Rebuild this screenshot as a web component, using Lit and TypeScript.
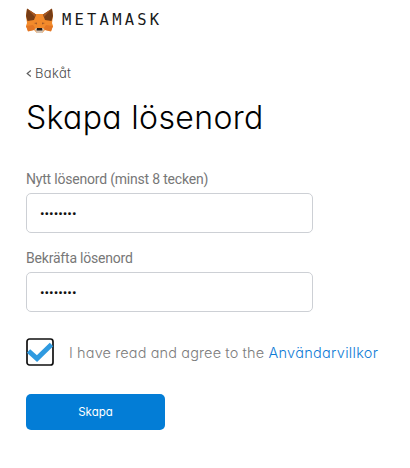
import { LitElement, html, css } from "lit";
import { customElement } from "lit/decorators.js";

@customElement("app-root")
export class AppRoot extends LitElement {
  static styles = css`
    :host {
      display: block;
      box-sizing: border-box;
      width: 410px;
      height: 468px;
      padding: 7px 26px 0;
      overflow: hidden;
      background: #fff;
      font-family: Inter, sans-serif;
      font-feature-settings: "cv11" 1;
      white-space: nowrap;
    }
    * { box-sizing: border-box; }
    .brand { display: flex; align-items: center; height: 26px; }
    .fox { width: 27px; height: 25px; margin-right: 9px; }
    .wordmark {
      font: 400 15.5px/26px "DejaVu Sans Mono", monospace;
      letter-spacing: 3.2px;
      color: #1a1a1a;
    }
    .back {
      display: flex;
      align-items: center;
      gap: 3px;
      height: 20px;
      margin-top: 30px;
      font-size: 13px;
      letter-spacing: 0.35px;
      color: #4d4d4d;
      font-weight: 300;
    }
    .back svg { width: 6px; height: 10px; }
    h1 {
      margin: 11px 0 0;
      height: 48px;
      font-size: 32px;
      letter-spacing: 0.35px;
      line-height: 48px;
      font-weight: 300;
      color: #000;
    }
    .label {
      display: block;
      height: 20px;
      font: 400 14px/20px Roboto, sans-serif;
      letter-spacing: -0.2px;
      color: #777;
    }
    .first { margin-top: 27px; }
    .second { margin-top: 15px; }
    .field {
      display: block;
      width: 287px;
      height: 40px;
      margin-top: 4px;
      padding: 0 13px 1px;
      border: 1px solid #cdd0d5;
      border-radius: 5px;
      outline: none;
      background: #fff;
      font: 400 13.500px/36px Roboto, sans-serif;
      color: #111;
    }
    .terms {
      display: flex;
      align-items: center;
      height: 28px;
      margin-top: 26px;
      font-size: 14.5px;
      letter-spacing: 0.12px;
      font-weight: 300;
      color: #7c7c7c;
    }
    .check { width: 28px; height: 28px; margin-right: 15px; }
    .link { color: #0f7cd6; letter-spacing: 0.3px; }
    .submit {
      display: block;
      width: 139px;
      height: 36px;
      margin-top: 28px;
      padding: 0;
      border: 0;
      border-radius: 5px;
      background: #037dd6;
      color: #fff;
      font: 400 11.500px/36px Inter, sans-serif;
      font-feature-settings: "cv11" 1;
    }
  `;

  render() {
    return html`
      <div class="brand">
        <svg class="fox" viewBox="0 0 27 25">
          <path d="M1 1 9 6H18L26 1 27 8 26 15 27 18 25 23 19 22 16 25H11L8 22 2 23 0 18 1 15 0 8Z" fill="#f28a2b"/>
          <path d="M1 .5 10 6.500 8 12 1.500 13 0 8ZM26 .5 17 6.500 19 12 25.500 13 27 8Z" fill="#763d16"/>
          <path d="M1 .5 10 6.500 9 9ZM26 .5 17 6.500 18 9Z" fill="#a85822"/>
          <path d="M0 18 7 17 9 20 8 22 2 23.500ZM27 18 20 17 18 20 19 22 25 23.500Z" fill="#e37624"/>
          <path d="M8 15 11 14.500 11 16.500ZM19 15 16 14.500 16 16.500Z" fill="#a65b28"/>
          <path d="M8.500 21 11 20H16L18.500 21 16 25H11Z" fill="#d5c5b5"/>
          <path d="M11 20H16L16.500 22.500H10.500Z" fill="#201b19"/>
        </svg>
        <span class="wordmark">METAMASK</span>
      </div>
      <div class="back">
        <svg viewBox="0 0 6 10"><path d="M4.800 2.500 1.200 5.500 4.800 8.500" fill="none" stroke="#5d5d5d" stroke-width="1.200"/></svg>
        <span>Bakåt</span>
      </div>
      <h1>Skapa lösenord</h1>
      <label class="label first" for="new">Nytt lösenord (minst 8 tecken)</label>
      <input class="field" id="new" type="password" value="password" />
      <label class="label second" for="confirm">Bekräfta lösenord</label>
      <input class="field" id="confirm" type="password" value="password" />
      <div class="terms">
        <svg class="check" viewBox="0 0 28 28">
          <rect x="1" y="1" width="26" height="26" rx="2.500" fill="#fff" stroke="#111" stroke-width="1.700"/>
          <path d="M2.500 13 11 20.500 25.500 6.500" fill="none" stroke="#2f9ae0" stroke-width="5"/>
        </svg>
        <span>I have read and agree to the <span class="link">Användarvillkor</span></span>
      </div>
      <button class="submit">Skapa</button>
    `;
  }
}
